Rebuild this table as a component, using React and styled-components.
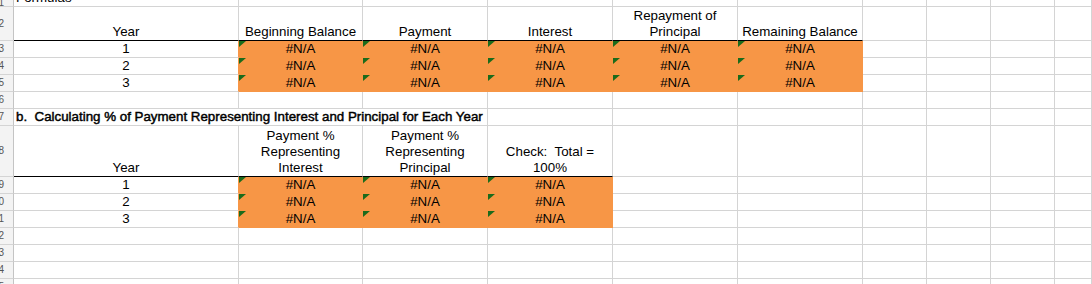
import React from 'react';
import styled, { createGlobalStyle, css } from 'styled-components';

const GlobalStyle = createGlobalStyle`
  html, body {
    margin: 0;
    padding: 0;
    background: #ffffff;
    overflow: hidden;
  }
  body {
    font-family: 'Liberation Sans', Arial, sans-serif;
  }
`;

const GRID = '#d4d4d4';
const ORANGE = '#f79646';
const FLAG = '#1b6b1b';

const Sheet = styled.div`
  display: grid;
  grid-template-columns: 14px 225px 124px 125px 125px 125px 125px 64px 64px 64px 1fr;
  grid-template-rows: ${(p) => p.$rows.map((h) => `${h}px`).join(' ')};
  width: 1092px;
  height: 284px;
  overflow: hidden;
  font-family: 'Liberation Sans', Arial, sans-serif;
  font-size: 13.333px;
  line-height: 16px;
  color: #000;
`;

const RowHead = styled.div`
  box-sizing: border-box;
  display: flex;
  align-items: center;
  justify-content: flex-end;
  padding-right: 9px;
  overflow: hidden;
  background: #f3f3f3;
  border-right: 1px solid #c4c4c4;
  border-bottom: 1px solid ${GRID};
  font-size: 10px;
  line-height: 12px;
  color: #555;
`;

const Cell = styled.div`
  position: relative;
  box-sizing: border-box;
  display: flex;
  flex-direction: column;
  justify-content: flex-end;
  align-items: ${(p) => (p.$align === 'left' ? 'flex-start' : 'center')};
  text-align: ${(p) => (p.$align === 'left' ? 'left' : 'center')};
  padding: 0 2px;
  white-space: pre;
  border-right: 1px solid ${(p) => (p.$edge ? ORANGE : GRID)};
  border-bottom: 1px solid ${GRID};
  ${(p) => p.$span && css`grid-column: span ${p.$span};`}
  ${(p) => p.$clip && css`overflow: hidden;`}
  ${(p) =>
    p.$strong &&
    css`
      -webkit-text-stroke: 0.45px #000;
    `}
  ${(p) =>
    p.$rule &&
    css`
      border-bottom-color: #000;
    `}
  ${(p) =>
    p.$fill &&
    css`
      background: ${ORANGE};
      border-right-color: ${ORANGE};
      border-bottom-color: ${ORANGE};
      &::before {
        content: '';
        position: absolute;
        top: 0;
        left: 0;
        width: 0;
        height: 0;
        border-top: 6px solid ${FLAG};
        border-right: 7px solid transparent;
      }
    `}
`;

const TOTAL_COLS = 10; // A..J

const blank = (n) => Array.from({ length: n }, () => ({}));

const loanHeaders = [
  'Year',
  'Beginning Balance',
  'Payment',
  'Interest',
  ['Repayment of', 'Principal'],
  'Remaining Balance',
];

const pctHeaders = [
  'Year',
  ['Payment %', 'Representing', 'Interest'],
  ['Payment %', 'Representing', 'Principal'],
  ['Check:  Total =', '100%'],
];

const valueRow = (year, filled) => [
  { text: String(year), edge: true },
  ...Array.from({ length: filled }, () => ({ text: '#N/A', fill: true })),
  ...blank(TOTAL_COLS - 1 - filled),
];

const rows = [
  { h: 7, cells: [{ text: 'Formulas', align: 'left', clip: true }, ...blank(9)] },
  { h: 34, cells: [...loanHeaders.map((t) => ({ text: t, rule: true })), ...blank(4)] },
  { h: 17, cells: valueRow(1, 5) },
  { h: 17, cells: valueRow(2, 5) },
  { h: 17, cells: valueRow(3, 5) },
  { h: 17, cells: blank(10) },
  {
    h: 17,
    cells: [
      {
        text: 'b.  Calculating % of Payment Representing Interest and Principal for Each Year',
        align: 'left',
        span: 3,
        strong: true,
      },
      ...blank(7),
    ],
  },
  { h: 51, cells: [...pctHeaders.map((t) => ({ text: t, rule: true })), ...blank(6)] },
  { h: 17, cells: valueRow(1, 3) },
  { h: 17, cells: valueRow(2, 3) },
  { h: 17, cells: valueRow(3, 3) },
  { h: 17, cells: blank(10) },
  { h: 17, cells: blank(10) },
  { h: 17, cells: blank(10) },
  { h: 17, cells: blank(10) },
];

const renderText = (text) => {
  if (!text) return null;
  if (Array.isArray(text)) {
    return text.map((line, i) => <span key={i}>{line}</span>);
  }
  return <span>{text}</span>;
};

export default function App() {
  return (
    <>
      <GlobalStyle />
      <Sheet $rows={rows.map((r) => r.h)}>
        {rows.map((row, ri) => (
          <React.Fragment key={ri}>
            <RowHead>{ri + 1}</RowHead>
            {row.cells.map((c, ci) => (
              <Cell
                key={ci}
                $align={c.align}
                $fill={c.fill}
                $rule={c.rule}
                $edge={c.edge && row.cells.some((x) => x.fill)}
                $span={c.span}
                $clip={c.clip}
                $strong={c.strong}
              >
                {renderText(c.text)}
              </Cell>
            ))}
          </React.Fragment>
        ))}
      </Sheet>
    </>
  );
}
